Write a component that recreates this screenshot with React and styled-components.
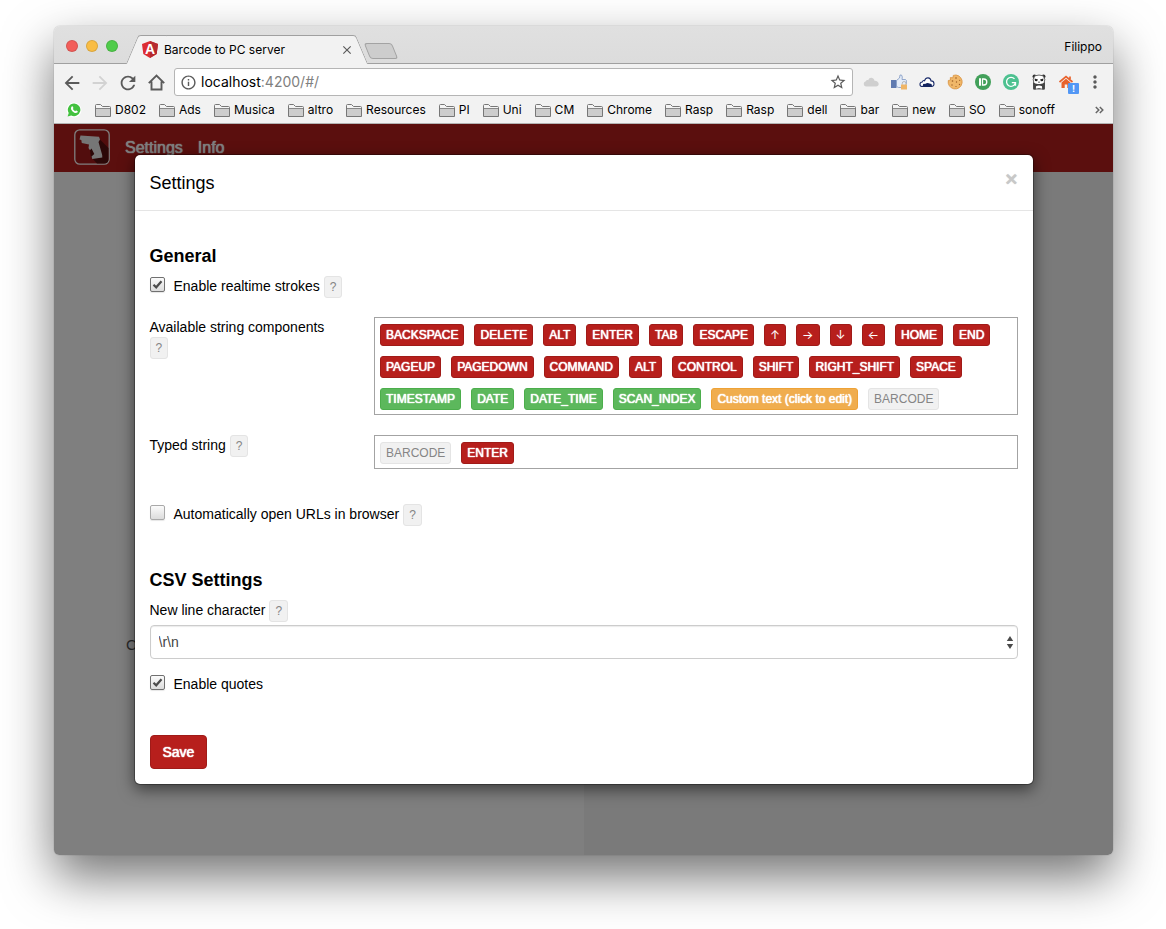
import React from 'react';
import styled, { createGlobalStyle, css } from 'styled-components';
import {
	MdArrowBack,
	MdArrowForward,
	MdClose,
	MdInfoOutline,
	MdMoreVert,
	MdRefresh,
	MdStarBorder,
} from 'react-icons/md';

const GlobalStyle = createGlobalStyle`
	* {
		box-sizing: border-box;
	}

	body {
		margin: 0;
		background: #fff;
		color: #000;
		font: 14px/20px 'Liberation Sans', Arial, sans-serif;
	}

	button,
	input,
	select {
		font: inherit;
		margin: 0;
	}

	svg {
		display: block;
		flex: none;
	}
`;

/* ---------- browser window ---------- */

const Desktop = styled.div`
	display: flex;
	min-height: 100vh;
	padding: 26px 53px 74px 54px;
	overflow: hidden;
`;

const BrowserWindow = styled.div`
	flex: 1;
	min-width: 0;
	display: flex;
	flex-direction: column;
	border-radius: 6px;
	box-shadow: 0 0 1px rgba(0, 0, 0, 0.5), 0 22px 50px rgba(0, 0, 0, 0.55);
`;

const Chrome = styled.header`
	background: #f2f2f2;
	border-bottom: 1px solid #b3b3b3;
	border-radius: 6px 6px 0 0;
	font-family: Inter, Roboto, sans-serif;
`;

const TabStrip = styled.div`
	display: flex;
	height: 38px;
	padding: 0 11px 0 12px;
	background: linear-gradient(#e0e0e0, #dcdcdc);
	border-bottom: 1px solid #a0a0a0;
	border-radius: 6px 6px 0 0;
`;

const TrafficLights = styled.div`
	display: flex;
	gap: 8px;
	padding-top: 14px;
	margin-right: 14px;
`;

const Light = styled.button`
	width: 12px;
	height: 12px;
	padding: 0;
	border: 1px solid rgba(0, 0, 0, 0.12);
	border-radius: 50%;
	background: ${(props) => props.$color};
`;

const tabSide = css`
	content: '';
	position: absolute;
	z-index: -1;
	top: 0;
	bottom: 0;
	background: #f2f2f2;
	border-top: 1px solid #a0a0a0;
`;

const Tab = styled.div`
	position: relative;
	z-index: 1;
	display: flex;
	align-items: center;
	width: 230px;
	height: 29px;
	margin-top: 9px;
	padding: 0 8px 0 10px;
	font-size: 12px;

	&::before {
		${tabSide}
		left: 0;
		right: 40px;
		border-left: 1px solid #a0a0a0;
		border-top-left-radius: 3px;
		transform: skewX(-23deg);
	}

	&::after {
		${tabSide}
		left: 40px;
		right: 0;
		border-right: 1px solid #a0a0a0;
		border-top-right-radius: 3px;
		transform: skewX(23deg);
	}
`;

const TabTitle = styled.span`
	flex: 1;
	margin-left: 6px;
`;

const NewTab = styled.button`
	width: 28px;
	height: 16px;
	margin: 17px 0 0 5px;
	padding: 0;
	background: #cdcdcd;
	border: 1px solid #a3a3a3;
	border-radius: 3px;
	transform: skewX(22deg);
`;

const Profile = styled.span`
	margin-left: auto;
	padding-top: 11px;
	font-size: 12px;
`;

const Toolbar = styled.div`
	display: flex;
	align-items: center;
	padding: 4px 8px 1px 7px;
	color: #5a5a5a;
`;

const IconButton = styled.button`
	display: grid;
	place-items: center;
	width: ${(props) => props.$width || 28}px;
	height: 20px;
	padding: 0;
	border: 0;
	background: none;
	color: ${(props) => (props.$faded ? '#d2d2d2' : '#5a5a5a')};
`;

const Omnibox = styled.div`
	flex: 1;
	display: flex;
	align-items: center;
	height: 28px;
	margin-right: 10px;
	padding: 0 5px;
	background: #fff;
	border: 1px solid #b5b5b5;
	border-radius: 3px;
	font-size: 14px;
`;

const Url = styled.div`
	flex: 1;
	margin-left: 4px;
	color: #808080;

	span {
		color: #000;
	}
`;

const Extensions = styled.div`
	display: flex;
	align-items: center;
	gap: 12px;
	margin-right: 10px;
`;

const BadgedIcon = styled.div`
	position: relative;
`;

const IconBadge = styled.span`
	position: absolute;
	left: 9px;
	top: 9px;
	width: 11px;
	height: 11px;
	background: #5297f5;
	border-radius: 1px;
	color: #fff;
	font-size: 9px;
	font-weight: bold;
	line-height: 11px;
	text-align: center;
`;

const BookmarksBar = styled.nav`
	display: flex;
	align-items: center;
	gap: 13px;
	height: 26px;
	padding: 0 9px 0 12px;
	font-size: 12px;
`;

const Bookmark = styled.a`
	display: flex;
	align-items: center;
	gap: 4px;
	color: #000;
	text-decoration: none;
	white-space: nowrap;
`;

const MoreBookmarks = styled.button`
	margin-left: auto;
	padding: 0;
	border: 0;
	background: none;
`;

/* ---------- page under the dialog ---------- */

const Viewport = styled.div`
	flex: 1;
	display: grid;
	border-radius: 0 0 5px 5px;
	overflow: hidden;
`;

const Site = styled.div`
	grid-area: 1 / 1;
	display: flex;
	flex-direction: column;
	background: #fff;
`;

const Navbar = styled.nav`
	display: flex;
	align-items: center;
	height: 48px;
	padding: 0 20px 2px;
	background: #b71f1c;
`;

const NavLink = styled.a`
	margin-left: 15px;
	padding-top: 2px;
	color: #fff;
	font-size: 16px;
	line-height: 22px;
	text-decoration: none;
	text-shadow: 0 0 1px #fff, 0 0 1px #fff;
`;

const Columns = styled.div`
	flex: 1;
	display: grid;
	grid-template-columns: 1fr 1fr;
`;

const DevicePane = styled.div`
	padding: 463px 72px 0;
	font-size: 15px;
	color: #555;
`;

const ScanPane = styled.div`
	background: #f4f4f4;
`;

/* ---------- dialog ---------- */

const Backdrop = styled.div`
	grid-area: 1 / 1;
	z-index: 1;
	background: rgba(0, 0, 0, 0.5);
`;

const Modal = styled.section`
	width: calc(100% - 60px);
	max-width: 900px;
	margin: 30px auto;
	background: #fff;
	background-clip: padding-box;
	border: 1px solid rgba(0, 0, 0, 0.3);
	border-radius: 6px;
	box-shadow: 0 5px 15px rgba(0, 0, 0, 0.5);
`;

const ModalHeader = styled.header`
	display: flex;
	justify-content: space-between;
	align-items: flex-start;
	padding: 14px 15px;
	border-bottom: 1px solid #e5e5e5;

	h4 {
		margin: 0;
		padding-top: 2px;
		font-size: 18px;
		font-weight: normal;
		line-height: 25px;
	}
`;

const Close = styled.button`
	padding: 0;
	border: 0;
	background: none;
	color: #c8c8c8;
	font-size: 21px;
	font-weight: bold;
	line-height: 20px;
	text-shadow: 0 0 1px #c8c8c8;
`;

const ModalBody = styled.form`
	padding: 15px;
`;

const Heading = styled.h4`
	margin: ${(props) => props.$top}px 0 10px;
	font-size: 18px;
	line-height: 20px;
`;

const Line = styled.div`
	display: flex;
	flex-wrap: wrap;
	align-items: flex-start;
	column-gap: 4px;
	min-height: 22px;
	margin-top: ${(props) => props.$top || 0}px;
	margin-bottom: ${(props) => props.$bottom || 0}px;
`;

const Row = styled.div`
	display: flex;
	margin: 0 -15px 20px;
`;

const LabelColumn = styled.div`
	flex: 0 0 25%;
	padding: 0 15px;
`;

const FieldColumn = styled.div`
	flex: 1;
	padding: 0 15px;
`;

const CheckLabel = styled.label`
	display: flex;
	align-items: flex-start;
	gap: 9px;
`;

const CheckWrap = styled.span`
	position: relative;
	display: flex;
	padding-top: 1px;

	svg {
		position: absolute;
		left: 0;
		top: 1px;
		pointer-events: none;
	}

	input:not(:checked) + svg {
		display: none;
	}
`;

const CheckInput = styled.input`
	appearance: none;
	width: 15px;
	height: 15px;
	background: linear-gradient(#fbfbfb, #dcdcdc);
	border: 1px solid #a9a9a9;
	border-radius: 2px;
	box-shadow: 0 1px 1px rgba(0, 0, 0, 0.1);

	&:checked {
		border-color: #707070;
	}
`;

const tagColors = {
	danger: css`
		background: #b71f1c;
		border-color: #a01b18;
	`,
	success: css`
		background: #5cb85c;
		border-color: #4cae4c;
	`,
	warning: css`
		background: #f0ad4e;
		border-color: #eea236;
	`,
	muted: css`
		background: #f1f1f1;
		border-color: #e4e4e4;
		color: #858585;
		text-shadow: none;
	`,
};

const Tag = styled.button`
	height: 22px;
	padding: 1px 5px;
	border: 1px solid;
	border-radius: 3px;
	color: #fff;
	font-size: 12px;
	line-height: 18px;
	text-shadow: 0 0 1px #fff, 0 0 1px #fff;
	${(props) => tagColors[props.$kind]}
`;

const Arrow = styled.span`
	font-family: Inter, sans-serif;
	text-shadow: none;
`;

const TagBox = styled.div`
	display: flex;
	flex-wrap: wrap;
	gap: 10px;
	padding: 6px 5px 4px;
	border: 1px solid #a3a3a3;
`;

const SelectWrap = styled.div`
	position: relative;
	margin: 3px 0 15px;

	svg {
		position: absolute;
		right: 4px;
		top: 11px;
		pointer-events: none;
	}
`;

const Select = styled.select`
	appearance: none;
	display: block;
	width: 100%;
	height: 34px;
	padding: 0 8px;
	background: #fff;
	border: 1px solid #ccc;
	border-radius: 4px;
	box-shadow: inset 0 1px 1px rgba(0, 0, 0, 0.08);
	color: #444;
`;

const SaveButton = styled.button`
	display: block;
	height: 34px;
	padding: 6px 12px;
	background: #b71f1c;
	border: 1px solid #a01b18;
	border-radius: 4px;
	color: #fff;
	text-shadow: 0 0 1px #fff, 0 0 1px #fff;
`;

/* ---------- drawings ---------- */

const AngularIcon = () => (
	<svg width="16" height="17" viewBox="0 0 16 17">
		<path d="M8 0 16 3 14.700 13 8 17 1.300 13 0 3Z" fill="#dd2c32" />
		<path d="M8 0 16 3 14.700 13 8 17Z" fill="#b52a30" />
		<text
			x="8"
			y="13"
			fill="#fff"
			fontFamily="Liberation Sans"
			fontWeight="bold"
			fontSize="14"
			textAnchor="middle"
		>
			A
		</text>
	</svg>
);

const HomeIcon = () => (
	<svg width="17" height="17" viewBox="0 0 17 17">
		<path
			d="M.8 9.200 8.500 1.500 16.200 9.200M3.500 7.500V15.500H13.500V7.500"
			fill="none"
			stroke="#5a5a5a"
			strokeWidth="1.900"
		/>
	</svg>
);

const FolderIcon = () => (
	<svg width="16" height="13" viewBox="0 0 16 13">
		<path
			d="M.5 12.500V1.500Q.5.500 1.500.500H5.500L7.500 2.500H14.500Q15.500 2.500 15.500 3.500V12.500Z"
			fill="#f4f4f4"
			stroke="#777"
		/>
		<path d="M1 4.500H15V12H1Z" fill="#cdcdcd" />
		<path d="M1 4.500H15" stroke="#888" />
	</svg>
);

const ChevronsIcon = () => (
	<svg width="9" height="8" viewBox="0 0 9 8">
		<path d="M.8 1 3.800 4 .8 7M4.800 1 7.800 4 4.800 7" fill="none" stroke="#666" strokeWidth="1.500" />
	</svg>
);

const WhatsAppIcon = () => (
	<svg width="16" height="16" viewBox="0 0 16 16">
		<circle cx="8" cy="8" r="7.500" fill="#fff" />
		<path
			d="M8.200 1.500a6.300 6.300 0 1 1-3 11.900L1.600 14.500l1.100-3.500A6.300 6.300 0 0 1 8.200 1.500Z"
			fill="#43c13f"
		/>
		<path
			d="M5.700 4.600c.5-.5 1-.3 1.200.2l.5 1.200c.1.400-.5.800-.5 1.100.5 1 1.300 1.700 2.300 2.200.4 0 .7-.8 1.100-.7l1.300.7c.4.300.1 1-.3 1.300-1 .8-2.400.5-3.700-.4C6.200 9.200 5.200 8 5 6.700c-.1-.8.2-1.600.7-2.100Z"
			fill="#fff"
		/>
	</svg>
);

const CloudIcon = () => (
	<svg width="16" height="16" viewBox="0 0 16 16">
		<path
			d="M3 12.500a2.700 2.700 0 0 1-.2-5.300C3.300 6 4.500 5.800 5.200 6.200 6.300 2.600 10.800 3 11.500 6.800c2-.3 4.200 1 4.200 3.300 0 1.500-1 2.400-2.700 2.400Z"
			fill="#cfcfcf"
		/>
	</svg>
);

const ThumbIcon = () => (
	<svg width="16" height="16" viewBox="0 0 16 16">
		<path d="M0 6H5.500V14H0Z" fill="#5f7ab0" />
		<path
			d="M5.500 6.500 8.500 4 9 1Q11 .2 11.300 3L11 5.500H14.500Q16 6.500 15.300 8 15.800 9.500 15 10.500 15.200 12 14 13.500H7.500L5.500 12.500Z"
			fill="#e4ecf8"
			stroke="#7f97c2"
			strokeWidth=".8"
		/>
		<path d="M11.300 10.500V9.300a1.800 1.800 0 0 1 3.600 0V10.500" fill="none" stroke="#b7b7b7" />
		<path d="M10 10.500H16V15.500H10Z" fill="#efb566" />
	</svg>
);

const NavyCloudIcon = () => (
	<svg width="16" height="16" viewBox="0 0 16 16">
		<path
			d="M3.500 12.500C.3 12.500.1 8.500 3.200 8 3.500 6.500 4.800 6.300 5.600 6.700 7 2.500 11.500 3.200 12 6.900c3.800 0 4 5.600.5 5.600Z"
			fill="#fff"
			stroke="#1c2d6b"
			strokeWidth="1.100"
		/>
		<path d="M3.500 12.800 4.200 10Q5 9.500 6 10 8.500 8.500 10.500 9.500L12.500 10 13.200 12.800Z" fill="#13245f" />
	</svg>
);

const CookieIcon = () => (
	<svg width="16" height="16" viewBox="0 0 16 16">
		<path
			d="M9 1a7 7 0 1 1-7.700 5.500L3.500 6 3.300 3.600 6 3.800 6.300 1.400Z"
			fill="#f0b769"
			stroke="#d8903e"
			strokeWidth=".8"
		/>
		<g fill="#9c5c24">
			<circle cx="9" cy="4" r=".8" />
			<circle cx="5.500" cy="7" r=".8" />
			<circle cx="9.500" cy="8" r=".7" />
			<circle cx="12.700" cy="6.300" r=".6" />
			<circle cx="5" cy="11" r=".7" />
			<circle cx="9" cy="12.500" r=".6" />
			<circle cx="12.500" cy="10.500" r=".7" />
		</g>
	</svg>
);

const PushIcon = () => (
	<svg width="16" height="16" viewBox="0 0 16 16">
		<circle cx="8" cy="8" r="8" fill="#42a05a" />
		<path d="M4 4.300H6V11.700H4Z" fill="#fff" />
		<path d="M7.500 5H8.800a3 3 0 0 1 0 6H7.500Z" fill="none" stroke="#fff" strokeWidth="1.300" />
	</svg>
);

const GrammarIcon = () => (
	<svg width="16" height="16" viewBox="0 0 16 16">
		<circle cx="8" cy="8" r="8" fill="#4dc190" />
		<path
			d="M11.500 4.900A4.500 4.500 0 1 0 12.300 9.300M8.800 8.700H12.500V11.800"
			fill="none"
			stroke="#fff"
			strokeWidth="1.300"
		/>
	</svg>
);

const PandaIcon = () => (
	<svg width="16" height="16" viewBox="0 0 16 16">
		<circle cx="3.500" cy="2.500" r="2" fill="#333" />
		<circle cx="12.500" cy="2.500" r="2" fill="#333" />
		<path
			d="M4 1.800Q8 .3 12 1.800 15 5.500 13.300 8L13 15H3L2.700 8Q1 5.500 4 1.800Z"
			fill="#fff"
			stroke="#555"
			strokeWidth=".9"
		/>
		<path d="M3.500 4.500 7 5.500 6 7.300 4 7Z" fill="#222" />
		<path d="M12.500 4.500 9 5.500 10 7.300 12 7Z" fill="#222" />
		<path d="M6.800 7.800H9.200L8 9Z" fill="#222" />
		<path d="M2 8.300Q5 10.500 8 10 11 10.500 14 8.300L13.800 15.500H11.200L11 12.200Q8 11 5 12.200L4.800 15.500H2.200Z" fill="#444" />
		<path d="M6.500 14.500H9.500" stroke="#666" strokeWidth="1" />
	</svg>
);

const HouseExtIcon = () => (
	<svg width="16" height="16" viewBox="0 0 16 16">
		<path d="M.5 8 7 2.500 13.500 8M11 2.500V5" fill="none" stroke="#e8622c" strokeWidth="1.700" />
		<path d="M2.500 8.500 7 4.800 11.500 8.500V14H8.300V10.500H5.700V14H2.500Z" fill="#e8622c" />
	</svg>
);

const ScannerLogo = () => (
	<svg width="36" height="36" viewBox="0 0 36 36">
		<rect x=".8" y=".8" width="34.400" height="34.400" rx="5" fill="#a51b1b" stroke="#fff" strokeWidth="1.300" />
		<path d="M24.500 9 34.500 19V30Q34.500 34.500 30 34.500H23L17 28 15 14Z" fill="#571010" />
		<path
			d="M6.500 6.500 25 7.700 26 10.500 24.500 13 28.200 26 28.300 28.500 18.300 30 17.500 27.500 20.300 25 17.500 19.500 16 21.200 14.500 19 15 15.500 7.800 14 7.300 11 5.500 10.500Z"
			fill="#ececec"
		/>
	</svg>
);

const CheckMark = () => (
	<svg width="15" height="15" viewBox="0 0 15 15">
		<path d="M3.500 7.700 6.200 10.300 11.500 4.200" fill="none" stroke="#4c4c4c" strokeWidth="2.200" />
	</svg>
);

const SelectArrows = () => (
	<svg width="8" height="13" viewBox="0 0 8 13">
		<path d="M4 0 7.200 5H.8ZM4 13 .8 8H7.200Z" fill="#4a4a4a" />
	</svg>
);

/* ---------- data ---------- */

const bookmarks = [
	'D802', 'Ads', 'Musica', 'altro', 'Resources', 'PI', 'Uni', 'CM',
	'Chrome', 'Rasp', 'Rasp', 'dell', 'bar', 'new', 'SO', 'sonoff',
];

const keys = [
	'BACKSPACE', 'DELETE', 'ALT', 'ENTER', 'TAB', 'ESCAPE', '↑', '→', '↓', '←', 'HOME', 'END',
	'PAGEUP', 'PAGEDOWN', 'COMMAND', 'ALT', 'CONTROL', 'SHIFT', 'RIGHT_SHIFT', 'SPACE',
];

const variables = ['TIMESTAMP', 'DATE', 'DATE_TIME', 'SCAN_INDEX'];

const components = [
	...keys.map((text) => ({ text, kind: 'danger' })),
	...variables.map((text) => ({ text, kind: 'success' })),
	{ text: 'Custom text (click to edit)', kind: 'warning' },
	{ text: 'BARCODE', kind: 'muted' },
];

const typedString = [
	{ text: 'BARCODE', kind: 'muted' },
	{ text: 'ENTER', kind: 'danger' },
];

function Help() {
	return (
		<Tag type="button" $kind="muted">
			?
		</Tag>
	);
}

function Checkbox({ children, defaultChecked }) {
	return (
		<CheckLabel>
			<CheckWrap>
				<CheckInput type="checkbox" defaultChecked={defaultChecked} />
				<CheckMark />
			</CheckWrap>
			{children}
		</CheckLabel>
	);
}

function Tags({ items }) {
	return (
		<TagBox>
			{items.map((item, i) => (
				<Tag key={i} type="button" $kind={item.kind}>
					{item.text.length === 1 ? <Arrow>{item.text}</Arrow> : item.text}
				</Tag>
			))}
		</TagBox>
	);
}

function BrowserChrome() {
	return (
		<Chrome>
			<TabStrip>
				<TrafficLights>
					<Light $color="#f25e5a" aria-label="Close window" />
					<Light $color="#f9bd45" aria-label="Minimize" />
					<Light $color="#50cc4b" aria-label="Zoom" />
				</TrafficLights>
				<Tab>
					<AngularIcon />
					<TabTitle>Barcode to PC server</TabTitle>
					<IconButton $width={14} aria-label="Close tab">
						<MdClose size={14} />
					</IconButton>
				</Tab>
				<NewTab aria-label="New tab" />
				<Profile>Filippo</Profile>
			</TabStrip>
			<Toolbar>
				<IconButton $width={22} aria-label="Back">
					<MdArrowBack size={22} />
				</IconButton>
				<IconButton $width={34} $faded aria-label="Forward">
					<MdArrowForward size={22} />
				</IconButton>
				<IconButton $width={22} aria-label="Reload">
					<MdRefresh size={22} />
				</IconButton>
				<IconButton $width={35} aria-label="Home">
					<HomeIcon />
				</IconButton>
				<Omnibox>
					<MdInfoOutline size={17} />
					<Url>
						<span>localhost</span>:4200/#/
					</Url>
					<IconButton $width={18} aria-label="Bookmark this page">
						<MdStarBorder size={18} />
					</IconButton>
				</Omnibox>
				<Extensions>
					<CloudIcon />
					<ThumbIcon />
					<NavyCloudIcon />
					<CookieIcon />
					<PushIcon />
					<GrammarIcon />
					<PandaIcon />
					<BadgedIcon>
						<HouseExtIcon />
						<IconBadge>!</IconBadge>
					</BadgedIcon>
				</Extensions>
				<IconButton $width={20} aria-label="Menu">
					<MdMoreVert size={20} />
				</IconButton>
			</Toolbar>
			<BookmarksBar>
				<Bookmark href="#whatsapp" aria-label="WhatsApp">
					<WhatsAppIcon />
				</Bookmark>
				{bookmarks.map((name, i) => (
					<Bookmark key={i} href={`#${name}`}>
						<FolderIcon />
						{name}
					</Bookmark>
				))}
				<MoreBookmarks aria-label="More bookmarks">
					<ChevronsIcon />
				</MoreBookmarks>
			</BookmarksBar>
		</Chrome>
	);
}

function SettingsModal() {
	return (
		<Modal role="dialog" aria-labelledby="settings-title">
			<ModalHeader>
				<h4 id="settings-title">Settings</h4>
				<Close type="button" aria-label="Close">
					×
				</Close>
			</ModalHeader>
			<ModalBody>
				<Heading $top={20}>General</Heading>
				<Line $bottom={19}>
					<Checkbox defaultChecked>Enable realtime strokes</Checkbox>
					<Help />
				</Line>

				<Row>
					<LabelColumn>
						<Line>
							<span>Available string components</span>
							<Help />
						</Line>
					</LabelColumn>
					<FieldColumn>
						<Tags items={components} />
					</FieldColumn>
				</Row>
				<Row>
					<LabelColumn>
						<Line>
							<span>Typed string</span>
							<Help />
						</Line>
					</LabelColumn>
					<FieldColumn>
						<Tags items={typedString} />
					</FieldColumn>
				</Row>

				<Line $top={35}>
					<Checkbox>Automatically open URLs in browser</Checkbox>
					<Help />
				</Line>

				<Heading $top={44}>CSV Settings</Heading>
				<Line>
					<label htmlFor="new-line">New line character</label>
					<Help />
				</Line>
				<SelectWrap>
					<Select id="new-line" defaultValue="crlf">
						<option value="crlf">\r\n</option>
					</Select>
					<SelectArrows />
				</SelectWrap>
				<Line $bottom={39}>
					<Checkbox defaultChecked>Enable quotes</Checkbox>
				</Line>

				<SaveButton type="button">Save</SaveButton>
			</ModalBody>
		</Modal>
	);
}

export default function App() {
	return (
		<Desktop>
			<GlobalStyle />
			<BrowserWindow>
				<BrowserChrome />
				<Viewport>
					<Site>
						<Navbar>
							<ScannerLogo />
							<NavLink href="#settings">Settings</NavLink>
							<NavLink href="#info">Info</NavLink>
						</Navbar>
						<Columns>
							<DevicePane>C</DevicePane>
							<ScanPane />
						</Columns>
					</Site>
					<Backdrop>
						<SettingsModal />
					</Backdrop>
				</Viewport>
			</BrowserWindow>
		</Desktop>
	);
}
